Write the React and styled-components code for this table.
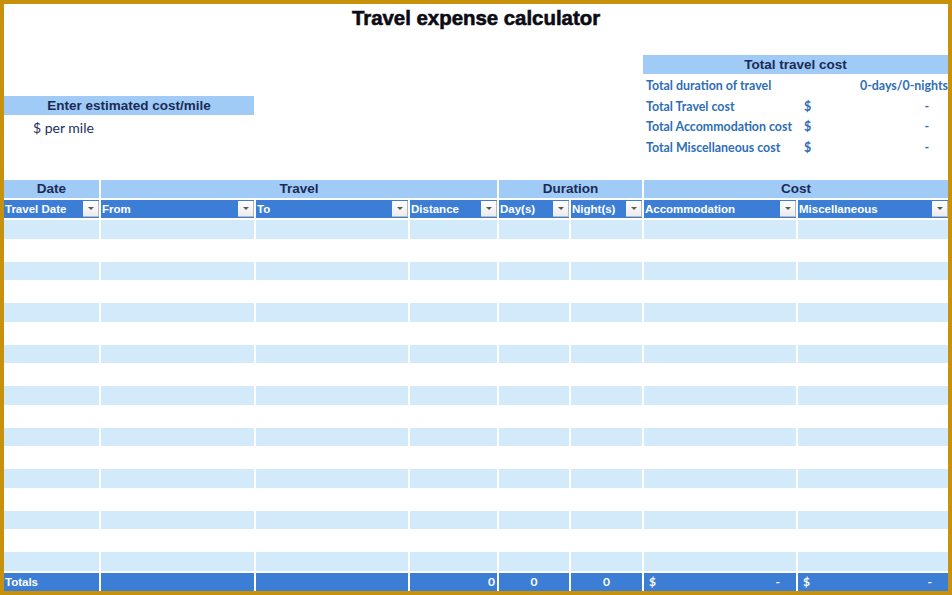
import React from "react";
import styled, { createGlobalStyle } from "styled-components";

const GlobalStyle = createGlobalStyle`
  html, body { margin: 0; padding: 0; background: #ffffff; }
  * { box-sizing: border-box; }
`;

const Frame = styled.div`
  width: 952px;
  height: 595px;
  border: 4px solid #c8910b;
  background: #ffffff;
  display: flex;
  flex-direction: column;
  font-family: "Liberation Sans", Arial, sans-serif;
  overflow: hidden;
`;

const Title = styled.h1`
  margin: 2px 0 0;
  height: 24px;
  line-height: 24px;
  font-size: 20.4px;
  font-weight: 700;
  text-align: center;
  color: #0c0c14;
  -webkit-text-stroke: 0.6px #0c0c14;
`;

const TopRow = styled.div`
  height: 150px;
  display: flex;
  justify-content: space-between;
  align-items: flex-start;
`;

const CostMilePanel = styled.section`
  width: 250px;
  margin-top: 66px;
  display: flex;
  flex-direction: column;
`;

const BandHeader = styled.div`
  height: 19px;
  line-height: 19px;
  background: #a0cbf7;
  color: #1b2a55;
  font-size: 13.5px;
  font-weight: 700;
  text-align: center;
`;

const PerMile = styled.div`
  margin-top: 4px;
  padding-left: 29px;
  height: 18px;
  line-height: 18px;
  font-family: Lato, "Open Sans", sans-serif;
  font-size: 14px;
  color: #1d2f5e;
`;

const SummaryPanel = styled.section`
  width: 305px;
  margin-top: 25px;
  display: flex;
  flex-direction: column;
`;

const SummaryList = styled.div`
  padding-top: 1px;
  display: flex;
  flex-direction: column;
`;

const SummaryRow = styled.div`
  height: 20.7px;
  display: grid;
  grid-template-columns: 161px 20px 1fr;
  align-items: center;
  font-family: Lato, "Open Sans", sans-serif;
  font-size: 12.4px;
  font-weight: 700;
  color: #2e6eb5;
`;

const SummaryLabel = styled.span`
  padding-left: 3px;
  white-space: nowrap;
`;

const SummaryValue = styled.span`
  text-align: right;
  padding-right: ${(p) => (p.$dash ? 19 : 0)}px;
  white-space: nowrap;
`;

const Table = styled.div`
  flex: 1;
  display: grid;
  grid-template-columns: 95px 153px 152px 87px 70px 71px 152px 150px;
  grid-template-rows: 18px 18px repeat(17, minmax(0, 1fr)) 18px;
  column-gap: 2px;
  row-gap: 2px;
`;

const GroupCell = styled.div`
  grid-column: span ${(p) => p.$span};
  background: #a0cbf7;
  color: #1b2a55;
  font-size: 13.5px;
  font-weight: 700;
  line-height: 18px;
  text-align: center;
`;

const HeadCell = styled.div`
  display: flex;
  align-items: stretch;
  background: #3c7ed6;
  color: #ffffff;
  font-size: 11.5px;
  font-weight: 700;
  line-height: 18px;
`;

const HeadLabel = styled.span`
  flex: 1;
  padding-left: 1px;
  white-space: nowrap;
  overflow: hidden;
`;

const FilterButton = styled.span`
  width: 16px;
  margin: 1px 0 1px;
  background: linear-gradient(#ffffff, #ececec);
  border-right: 1px solid #b9b9b9;
  border-bottom: 1px solid #b9b9b9;
  display: flex;
  align-items: center;
  justify-content: center;
  &::after {
    content: "";
    border-left: 3px solid transparent;
    border-right: 3px solid transparent;
    border-top: 3px solid #5a5a5a;
  }
`;

const DataCell = styled.div`
  background: ${(p) => (p.$shaded ? "#d3eafb" : "transparent")};
`;

const TotalCell = styled.div`
  background: #3c7ed6;
  color: #ffffff;
  font-family: ${(p) => (p.$label ? '"Liberation Sans", Arial, sans-serif' : 'Lato, "Open Sans", sans-serif')};
  font-size: ${(p) => (p.$label ? 11.5 : 12)}px;
  font-weight: 700;
  line-height: 18px;
  display: flex;
  justify-content: ${(p) => p.$justify || "flex-start"};
  padding: 0 ${(p) => p.$padR || 0}px 0 ${(p) => p.$padL || 0}px;
`;

const groups = [
  { label: "Date", span: 1 },
  { label: "Travel", span: 3 },
  { label: "Duration", span: 2 },
  { label: "Cost", span: 2 },
];

const columns = [
  "Travel Date",
  "From",
  "To",
  "Distance",
  "Day(s)",
  "Night(s)",
  "Accommodation",
  "Miscellaneous",
];

const summary = [
  { label: "Total duration of travel", cur: "", value: "0-days/0-nights", dash: false },
  { label: "Total Travel cost", cur: "$", value: "-", dash: true },
  { label: "Total Accommodation cost", cur: "$", value: "-", dash: true },
  { label: "Total Miscellaneous cost", cur: "$", value: "-", dash: true },
];

export default function App() {
  const rows = Array.from({ length: 17 }, (_, i) => i);
  return (
    <>
      <GlobalStyle />
      <Frame>
        <Title>Travel expense calculator</Title>
        <TopRow>
          <CostMilePanel>
            <BandHeader>Enter estimated cost/mile</BandHeader>
            <PerMile>$ per mile</PerMile>
          </CostMilePanel>
          <SummaryPanel>
            <BandHeader>Total travel cost</BandHeader>
            <SummaryList>
              {summary.map((s) => (
                <SummaryRow key={s.label}>
                  <SummaryLabel>{s.label}</SummaryLabel>
                  <span>{s.cur}</span>
                  <SummaryValue $dash={s.dash}>{s.value}</SummaryValue>
                </SummaryRow>
              ))}
            </SummaryList>
          </SummaryPanel>
        </TopRow>
        <Table>
          {groups.map((g) => (
            <GroupCell key={g.label} $span={g.span}>
              {g.label}
            </GroupCell>
          ))}
          {columns.map((c) => (
            <HeadCell key={c}>
              <HeadLabel>{c}</HeadLabel>
              <FilterButton />
            </HeadCell>
          ))}
          {rows.map((r) =>
            columns.map((c) => <DataCell key={`${r}-${c}`} $shaded={r % 2 === 0} />)
          )}
          <TotalCell $label $padL={1}>Totals</TotalCell>
          <TotalCell />
          <TotalCell />
          <TotalCell $justify="flex-end" $padR={2}>0</TotalCell>
          <TotalCell $justify="center">0</TotalCell>
          <TotalCell $justify="center">0</TotalCell>
          <TotalCell $justify="space-between" $padL={5} $padR={16}>
            <span>$</span>
            <span>-</span>
          </TotalCell>
          <TotalCell $justify="space-between" $padL={5} $padR={16}>
            <span>$</span>
            <span>-</span>
          </TotalCell>
        </Table>
      </Frame>
    </>
  );
}
